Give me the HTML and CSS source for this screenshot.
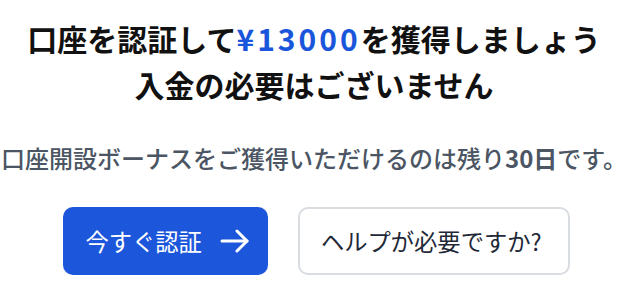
FILE: index.html
```html
<!DOCTYPE html>
<html lang="ja">
<head>
    <meta charset="UTF-8">
    <meta name="viewport" content="width=device-width, initial-scale=1.0">
    <title>口座認証</title>
    <link rel="stylesheet" href="styles.css">
</head>
<body>
    <div class="container">
        <h1 class="title">
            口座を認証して<span class="amount">¥13000</span>を獲得しましょう<br>
            入金の必要はございません
        </h1>
        <p class="subtitle">口座開設ボーナスをご獲得いただけるのは残り<strong>30日</strong>です。</p>
        <div class="actions">
            <button class="btn btn-primary">
                今すぐ認証
                <svg class="arrow" width="30" height="24" viewBox="0 0 30 24" fill="none" stroke="currentColor" stroke-width="3" stroke-linecap="round" stroke-linejoin="round">
                    <path d="M2 12H27"/>
                    <path d="M17 2L27 12L17 22"/>
                </svg>
            </button>
            <button class="btn btn-secondary">ヘルプが必要ですか?</button>
        </div>
    </div>
</body>
</html>
```

FILE: styles.css
```css
body {
    margin: 0;
    padding: 0;
    background-color: #fff;
    font-family: "Noto Sans CJK JP", "Noto Sans", sans-serif;
    color: #111;
}
.container {
    text-align: center;
}
.title {
    margin: 15px 0 0;
    font-size: 30px;
    line-height: 46px;
    font-weight: 700;
    color: #111;
    white-space: nowrap;
}
.amount {
    color: #1a56db;
    letter-spacing: 3px;
}
.subtitle {
    margin: 35px 0 0;
    font-size: 24px;
    line-height: 32px;
    font-weight: 500;
    color: #4b5563;
    white-space: nowrap;
}
.subtitle strong {
    font-weight: 700;
}
.actions {
    display: flex;
    justify-content: center;
    gap: 30px;
    margin-top: 33px;
    padding-left: 5px;
}
.btn {
    display: flex;
    align-items: center;
    height: 68px;
    border-radius: 10px;
    font-family: "Noto Sans CJK JP", "Noto Sans", sans-serif;
    font-size: 23.3px;
    cursor: pointer;
    box-sizing: border-box;
}
.btn-primary {
    background-color: #1c56db;
    color: #fff;
    border: none;
    gap: 18px;
    padding: 0 18px 0 22px;
}
.btn-secondary {
    background-color: #fff;
    color: #1f2937;
    border: 2px solid #d9dce1;
    padding: 0 26px 0 21px;
}
.arrow {
    display: block;
}
```
